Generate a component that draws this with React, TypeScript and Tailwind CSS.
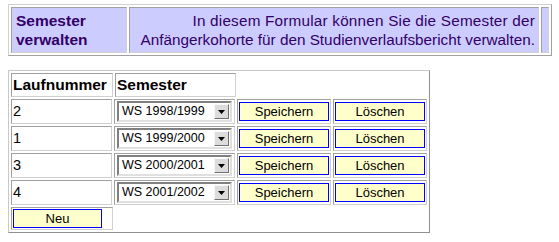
import React from 'react';

const rows = [
  { nr: '2', sem: 'WS 1998/1999' },
  { nr: '1', sem: 'WS 1999/2000' },
  { nr: '3', sem: 'WS 2000/2001' },
  { nr: '4', sem: 'WS 2001/2002' },
];

const cell = 'border border-t-[#a0a0a0] border-l-[#a0a0a0] border-b-[#d0d0d0] border-r-[#d0d0d0]';

const YellowButton = ({ label, className }: { label: string; className: string }) => (
  <button
    className={`h-[19px] border border-[#0000ff] bg-[#ffffcc] text-[13px] leading-none text-black ${className}`}
  >
    {label}
  </button>
);

const SemesterSelect = ({ value }: { value: string }) => (
  <div className="flex h-[21px] w-[115px] items-center border-2 border-t-[#808080] border-l-[#808080] border-b-[#e0e0e0] border-r-[#e0e0e0] bg-white">
    <span className="flex-1 pl-[3px] text-[12.5px] leading-none text-black">{value}</span>
    <span className="mr-[1px] flex h-[15px] w-[15px] items-center justify-center border border-t-[#f8f8f8] border-l-[#f8f8f8] border-b-[#707070] border-r-[#707070] bg-[#dcdcdc]">
      <svg width="7" height="4" viewBox="0 0 7 4">
        <path d="M0 0h7L3.5 4z" fill="#000" />
      </svg>
    </span>
  </div>
);

export default function App() {
  return (
    <div className="min-h-[242px] w-[559px] bg-white pl-2 pt-[4px] font-['Liberation_Sans',Arial,sans-serif]">
      <div className="flex w-[544px] gap-[2px] border border-t-[#d0d0d0] border-l-[#d0d0d0] border-b-[#a0a0a0] border-r-[#a0a0a0] p-[2px]">
        <div className={`${cell} w-[116px] bg-[#ccccff] px-[4px] py-[3px] text-[15.5px] font-bold leading-[19px] text-[#330066]`}>
          Semester
          <br />
          verwalten
        </div>
        <div className={`${cell} flex-1 whitespace-nowrap bg-[#ccccff] px-[3px] py-[3px] text-right text-[15.3px] leading-[19px] text-[#330066]`}>
          <span className="tracking-[0.2px]">In diesem Formular können Sie die Semester der</span>
          <br />
          Anfängerkohorte für den Studienverlaufsbericht verwalten.
        </div>
        <div className={`${cell} w-[8px] bg-[#ccccff]`} />
      </div>

      <div className="mt-[14px] flex w-[422px] flex-col gap-[2px] border border-t-[#c8c8c8] border-l-[#c8c8c8] border-b-[#909090] border-r-[#909090] p-[2px]">
        <div className="flex gap-[2px]">
          <div className={`${cell} flex h-[24px] w-[102px] items-center px-[1px] text-[15.5px] font-bold text-black`}>
            Laufnummer
          </div>
          <div className={`${cell} flex h-[24px] w-[121px] items-center px-[1px] text-[15.5px] font-bold text-black`}>
            Semester
          </div>
        </div>
        {rows.map((r) => (
          <div key={r.nr} className="flex gap-[2px]">
            <div className={`${cell} flex h-[25px] w-[102px] items-center px-[1px] text-[14.5px] text-black`}>
              {r.nr}
            </div>
            <div className={`${cell} flex h-[25px] w-[121px] items-center px-[2px]`}>
              <SemesterSelect value={r.sem} />
            </div>
            <div className={`${cell} flex h-[25px] w-[94px] items-center px-[1px]`}>
              <YellowButton label="Speichern" className="w-[90px]" />
            </div>
            <div className={`${cell} flex h-[25px] w-[94px] items-center px-[1px]`}>
              <YellowButton label="Löschen" className="w-[90px]" />
            </div>
          </div>
        ))}
        <div className="flex gap-[2px]">
          <div className={`${cell} flex h-[23px] w-[102px] items-center px-[1px]`}>
            <YellowButton label="Neu" className="w-[89px]" />
          </div>
        </div>
      </div>
    </div>
  );
}
